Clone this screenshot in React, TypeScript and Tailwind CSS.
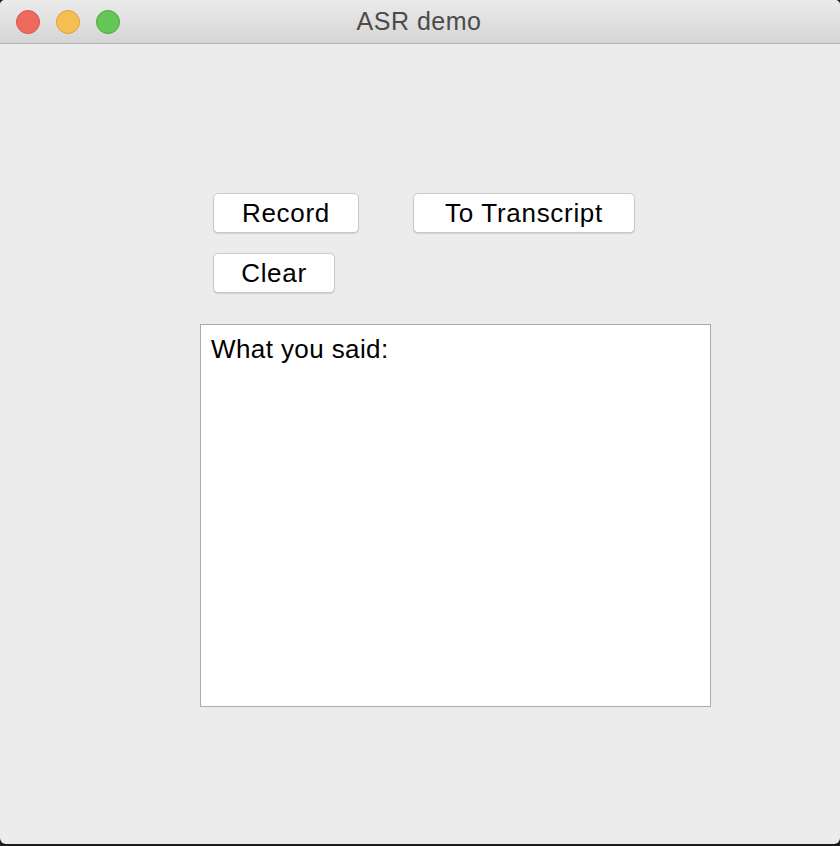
import React from 'react';

const font = { fontFamily: '"Liberation Sans", Arial, sans-serif' };

const MacButton: React.FC<{ label: string; width: string }> = ({ label, width }) => (
  <button
    className={`${width} h-[40px] flex items-center justify-center bg-white border border-[#c9c9c9] rounded-[5px] shadow-[0_1px_1px_rgba(0,0,0,0.12)] text-[26px] tracking-[0.7px] text-black`}
  >
    {label}
  </button>
);

const App: React.FC = () => {
  return (
    <div className="w-[840px] h-[846px] bg-[#1c1c1c] overflow-hidden" style={font}>
      <div className="w-[840px] h-[844px] flex flex-col bg-[#ececec] rounded-t-[5px] rounded-b-[6px] overflow-hidden">
        {/* Title bar */}
        <div className="relative h-[44px] shrink-0 flex items-center justify-center bg-gradient-to-b from-[#ebebeb] to-[#d5d5d5] border-b border-[#b1b1b1]">
          <div className="absolute left-[16px] top-[10px] flex gap-[16px]">
            <span className="w-[24px] h-[24px] rounded-full bg-[#ee6a5f] border border-[#d8564b]" />
            <span className="w-[24px] h-[24px] rounded-full bg-[#f6be50] border border-[#dfa23a]" />
            <span className="w-[24px] h-[24px] rounded-full bg-[#63c655] border border-[#4ea83f]" />
          </div>
          <span className="text-[25px] tracking-[0.5px] text-[#4b4b4b] pr-[2px] pt-[1px]">ASR demo</span>
        </div>

        {/* Content */}
        <div className="flex flex-col pl-[200px] pt-[149px]">
          <div className="flex flex-col gap-[20px] pl-[13px]">
            <div className="flex gap-[54px]">
              <MacButton label="Record" width="w-[146px]" />
              <MacButton label="To Transcript" width="w-[222px]" />
            </div>
            <div className="flex">
              <MacButton label="Clear" width="w-[122px]" />
            </div>
          </div>
          <div className="mt-[31px] w-[511px] h-[383px] bg-white border border-[#a9a9a9] pl-[10px] pt-[9px]">
            <p className="text-[26px] leading-[30px] tracking-[0.4px] text-black">What you said:</p>
          </div>
        </div>
      </div>
    </div>
  );
};

export default App;
